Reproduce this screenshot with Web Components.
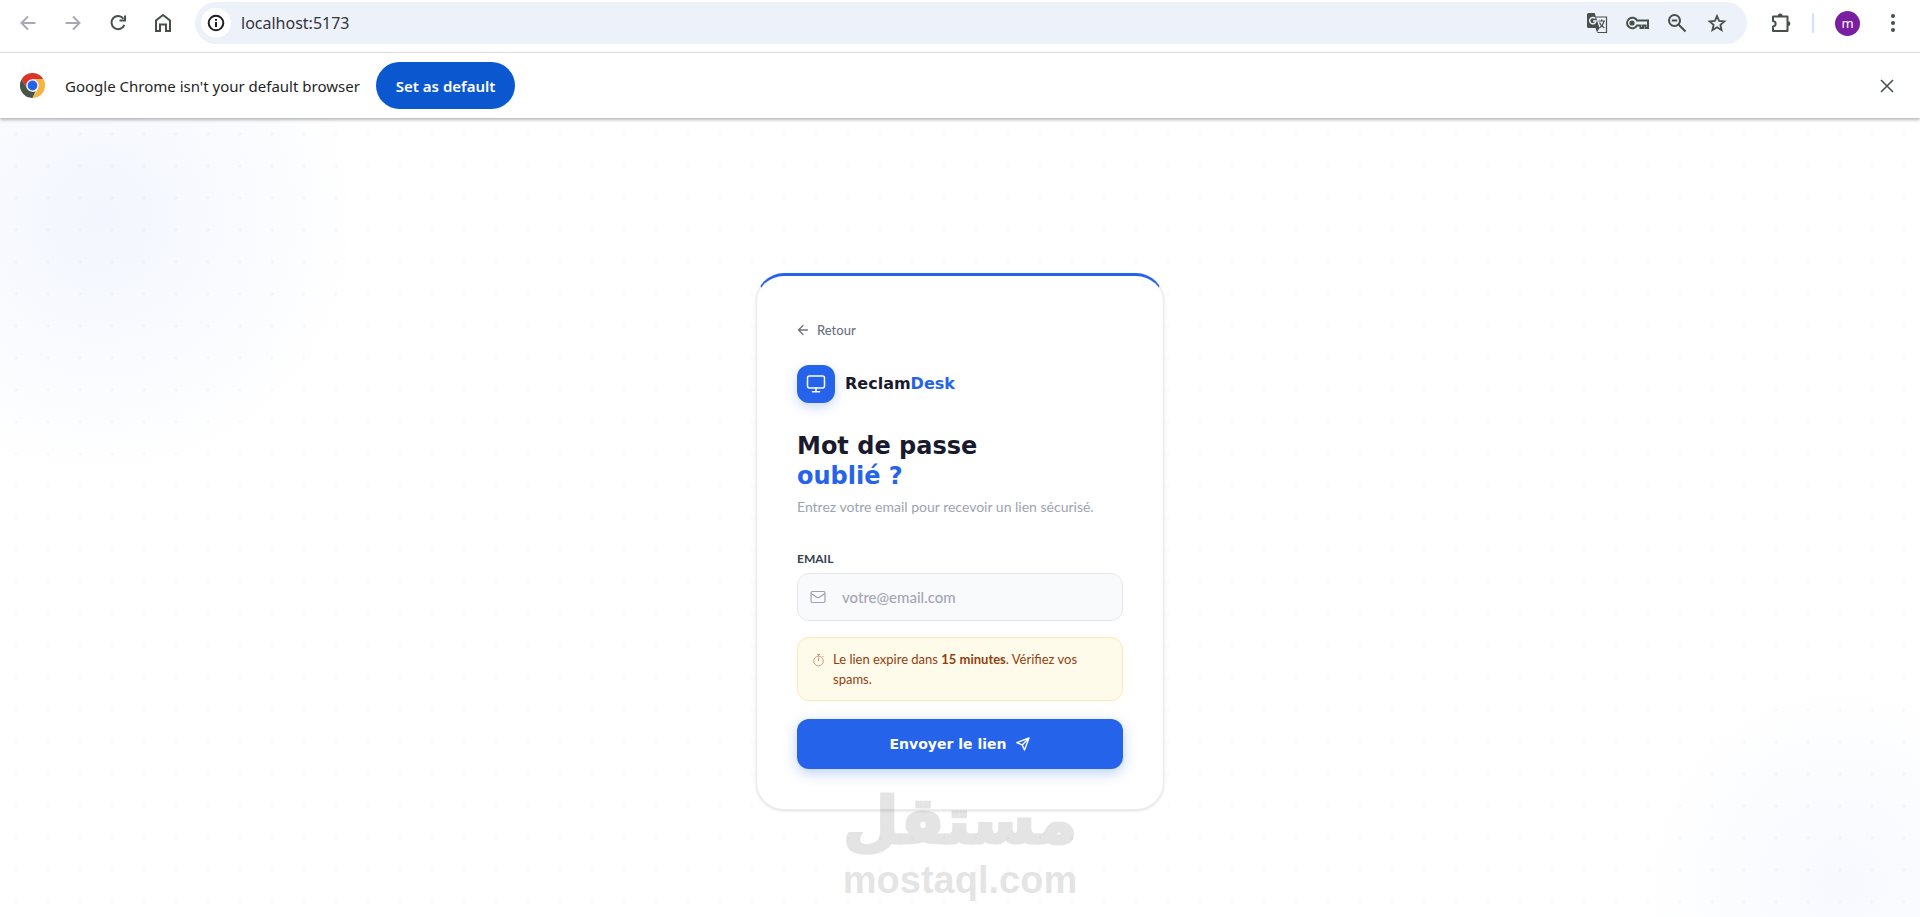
<!DOCTYPE html>
<html lang="fr">
<head>
<meta charset="utf-8">
<meta name="viewport" content="width=device-width, initial-scale=1">
<title>ReclamDesk</title>
<style>
    html, body { margin: 0; }
    body {
        display: flex;
        flex-direction: column;
        min-height: 100vh;
        background: #fff;
        font-family: Lato, "Liberation Sans", sans-serif;
        --blue: #2563eb;
        --ink: #1a1a2e;
        --title-font: "DejaVu Sans", sans-serif;
        --chrome-font: "Noto Sans", "Open Sans", sans-serif;
    }
</style>
</head>
<body>
<browser-toolbar></browser-toolbar>
<browser-infobar>
    Google Chrome isn't your default browser
    <span slot="action">Set as default</span>
</browser-infobar>
<reclam-page>
    <reclam-card>
        <reclam-brand slot="brand"></reclam-brand>
        <span slot="title">Mot de passe</span>
        <span slot="highlight">oublié ?</span>
        <span slot="subtitle">Entrez votre email pour recevoir un lien sécurisé.</span>
        <reclam-field label="Email" placeholder="votre@email.com"></reclam-field>
        <reclam-notice>Le lien expire dans <strong>15 minutes</strong>. Vérifiez vos spams.</reclam-notice>
        <reclam-submit>Envoyer le lien</reclam-submit>
    </reclam-card>
    <mostaql-mark slot="mark"></mostaql-mark>
</reclam-page>

<script>
// Barre d'outils du navigateur
class BrowserToolbar extends HTMLElement {
    constructor() {
        super();
        this._root = this.attachShadow({ mode: "open" });
    }
    connectedCallback() {
        this._root.innerHTML = `
            <style>
                :host {
                    display: flex;
                    align-items: center;
                    height: 53px;
                    box-sizing: border-box;
                    padding: 2px 12px 8px 12px;
                    border-bottom: 1px solid #dcdcdc;
                    background: #fff;
                    color: #47504b;
                    font-family: var(--chrome-font);
                }
                button {
                    display: flex;
                    align-items: center;
                    justify-content: center;
                    flex: none;
                    padding: 0;
                    border: 0;
                    background: none;
                    color: inherit;
                    font: inherit;
                }
                svg { display: block; fill: none; stroke: currentColor; stroke-width: 2; }
                nav { display: flex; gap: 13px; }
                nav button { width: 32px; height: 32px; }
                nav button:disabled { color: #a9a9b4; }
                .address {
                    display: flex;
                    align-items: center;
                    flex: 1;
                    height: 42px;
                    box-sizing: border-box;
                    margin: 0 14px 0 16px;
                    padding: 0 10px 0 6px;
                    border-radius: 21px;
                    background: #edf1fa;
                }
                .info { width: 30px; height: 30px; border-radius: 50%; background: #fff; color: #1f1f1f; }
                input {
                    flex: 1;
                    min-width: 0;
                    padding: 0;
                    margin-left: 10px;
                    border: 0;
                    outline: 0;
                    background: none;
                    color: #33363b;
                    font: 16px/24px var(--chrome-font);
                }
                .actions { display: flex; }
                .actions button { width: 40px; height: 32px; }
                .ext { width: 40px; height: 32px; }
                .sep { width: 2px; height: 20px; margin: 0 21px 0 11px; background: #d3e3fd; }
                .avatar {
                    width: 25px;
                    height: 25px;
                    border-radius: 50%;
                    background: #7b1fa2;
                    color: #fff;
                    font-size: 13px;
                    line-height: 20px;
                }
                .menu { width: 30px; height: 32px; margin-left: 18px; }
                .menu svg { fill: currentColor; stroke: none; }
            </style>
            <nav>
                <button disabled aria-label="Back"><svg width="16" height="16" viewBox="0 0 16 16"><path d="M15.500 8H1.500M8 1.500 1.500 8 8 14.500"/></svg></button>
                <button disabled aria-label="Forward"><svg width="16" height="16" viewBox="0 0 16 16"><path d="M.5 8h14M8 1.500 14.500 8 8 14.500"/></svg></button>
                <button aria-label="Reload"><svg width="18" height="18" viewBox="0 0 18 18"><path d="M14.500 4.800A6.600 6.600 0 1 0 15.300 10.800M16 1.500v5h-5.500"/></svg></button>
                <button aria-label="Home"><svg width="18" height="20" viewBox="0 0 18 20"><path d="M2 18V7.500L9 2l7 5.500V18h-4v-6.500H6V18z"/></svg></button>
            </nav>
            <div class="address">
                <button class="info" aria-label="Site information">
                    <svg width="18" height="18" viewBox="0 0 18 18"><circle cx="9" cy="9" r="7.300"/><path d="M9 8v5M9 5v1.800"/></svg>
                </button>
                <input type="text" aria-label="Address" value="localhost:5173">
                <div class="actions">
                    <button aria-label="Translate">
                        <svg width="22" height="22" viewBox="0 0 22 22" stroke-width="1.300">
                            <path d="M10 5h10.500v15.500H11.500" stroke-width="1.200"/>
                            <path fill="currentColor" stroke="none" d="M2.500 1h6.200L13.500 16 11 20.500 9.500 16h-7A1.500 1.500 0 0 1 1 14.500v-12A1.500 1.500 0 0 1 2.500 1z"/>
                            <path stroke="#edf1fa" stroke-width="1.500" d="M9.200 6.500A3.200 3.200 0 1 0 10 9H7"/>
                            <path stroke-width="1.200" d="M12.500 9H19M15.700 7.500V9M18 9c-.5 3-2.500 5.500-4.500 7M13.500 10.500c1 2.500 3 4.500 5 5.500"/>
                        </svg>
                    </button>
                    <button aria-label="Passwords">
                        <svg width="24" height="14" viewBox="0 0 24 14"><path d="M12 4.500h11v7.500h-2.500V9.500H18V12h-2.500V9.500H12A5.300 5.300 0 1 1 12 4.500z"/><circle cx="7" cy="7" r="1.600" fill="currentColor"/></svg>
                    </button>
                    <button aria-label="Zoom">
                        <svg width="20" height="20" viewBox="0 0 20 20"><circle cx="7.500" cy="7.500" r="5.500"/><path d="m11.500 11.500 7 7M4.800 7.500h5.400"/></svg>
                    </button>
                    <button aria-label="Bookmark">
                        <svg width="20" height="20" viewBox="0 0 20 20"><path stroke-width="1.800" d="m10 3 2.100 4.900 5.300.5-4 3.500 1.200 5.200-4.600-2.800-4.600 2.800 1.200-5.200-4-3.500 5.300-.5z"/></svg>
                    </button>
                </div>
            </div>
            <button class="ext" aria-label="Extensions">
                <svg width="22" height="22" viewBox="0 0 22 22"><path d="M3 4.500h14.500V19H3v-4.500c3.500-.5 3.500-5 0-5.500z" stroke-linejoin="round"/><path fill="currentColor" stroke="none" d="M7.800 4a2.400 2.400 0 0 1 4.800 0zM18 9.300a2.400 2.400 0 0 1 0 4.800z"/></svg>
            </button>
            <span class="sep"></span>
            <button class="avatar">m</button>
            <button class="menu" aria-label="Menu">
                <svg width="4" height="18" viewBox="0 0 4 18"><circle cx="2" cy="2" r="2"/><circle cx="2" cy="9" r="2"/><circle cx="2" cy="16" r="2"/></svg>
            </button>
        `;
    }
}

// Bandeau "navigateur par défaut"
class BrowserInfobar extends HTMLElement {
    constructor() {
        super();
        this._root = this.attachShadow({ mode: "open" });
    }
    connectedCallback() {
        this._root.innerHTML = `
            <style>
                :host {
                    display: flex;
                    align-items: center;
                    position: relative;
                    z-index: 1;
                    height: 65px;
                    box-sizing: border-box;
                    padding: 0 20px;
                    background: #fff;
                    box-shadow: 0 2px 3px rgba(0, 0, 0, .28);
                    color: #1f1f1f;
                    font: 15px/24px var(--chrome-font);
                }
                .logo { flex: none; margin-right: 20px; }
                .action {
                    height: 47px;
                    margin-left: 16px;
                    padding: 0 20px;
                    border: 0;
                    border-radius: 24px;
                    background: #0b57d0;
                    color: #fff;
                    font: 600 15px/24px var(--chrome-font);
                }
                .close { margin-left: auto; padding: 6px; border: 0; background: none; color: #47504b; }
                .close svg { display: block; }
            </style>
            <svg class="logo" width="25" height="25" viewBox="0 0 24 24">
                <path fill="#db3328" d="M1.600 6A12 12 0 0 1 22.400 6H12L6.800 15z"/>
                <path fill="#f5b342" d="M22.400 6A12 12 0 0 1 12 24l5.200-9L12 6z"/>
                <path fill="#47544a" d="M12 24A12 12 0 0 1 1.600 6l5.200 9 5.200 3 3-.5z"/>
                <circle cx="12" cy="12" r="6" fill="#fff"/>
                <circle cx="12" cy="12" r="4.700" fill="#2463eb"/>
            </svg>
            <span><slot></slot></span>
            <button class="action"><slot name="action"></slot></button>
            <button class="close" aria-label="Close">
                <svg width="14" height="14" viewBox="0 0 14 14" fill="none" stroke="currentColor" stroke-width="1.600"><path d="m1 1 12 12M13 1 1 13"/></svg>
            </button>
        `;
    }
}

// Fond de page : halos bleus + grille de points
class ReclamPage extends HTMLElement {
    constructor() {
        super();
        this._root = this.attachShadow({ mode: "open" });
    }
    connectedCallback() {
        this._root.innerHTML = `
            <style>
                :host {
                    display: flex;
                    flex: 1;
                    flex-direction: column;
                    align-items: center;
                    justify-content: center;
                    position: relative;
                    box-sizing: border-box;
                    padding: 48px 16px 0;
                    background:
                        radial-gradient(circle 260px at 100px 100px, rgba(37, 99, 235, .06), transparent),
                        radial-gradient(circle 200px at calc(100% - 78px) calc(100% - 34px), rgba(37, 99, 235, .04), transparent),
                        radial-gradient(circle, rgba(26, 26, 46, .04) 1px, transparent 1px) 0 0 / 32px 32px,
                        #fff;
                }
                .mark { position: absolute; bottom: 16px; left: 50%; transform: translateX(-50%); }
            </style>
            <slot></slot>
            <div class="mark"><slot name="mark"></slot></div>
        `;
    }
}

class ReclamCard extends HTMLElement {
    constructor() {
        super();
        this._root = this.attachShadow({ mode: "open" });
    }
    connectedCallback() {
        this._root.innerHTML = `
            <style>
                :host {
                    display: block;
                    width: 100%;
                    max-width: 408px;
                    box-sizing: border-box;
                    padding: 40px;
                    border: 1px solid #eceef0;
                    border-top: 3px solid var(--blue);
                    border-radius: 28px;
                    background: #fff;
                    box-shadow: 0 1px 3px rgba(0, 0, 0, .14);
                }
                .back {
                    display: flex;
                    align-items: center;
                    width: fit-content;
                    gap: 8px;
                    margin-bottom: 21px;
                    color: #6b7280;
                    font-size: 13px;
                    line-height: 28px;
                    font-weight: 500;
                    text-decoration: none;
                }
                h1 {
                    margin: 28px 0 6px;
                    color: var(--ink);
                    font: 700 24px/30px var(--title-font);
                }
                h1 em { display: block; color: var(--blue); font-style: normal; }
                .subtitle { margin: 0 0 34px; color: #9ca3af; font-size: 14px; line-height: 20px; }
                form { display: flex; flex-direction: column; gap: 16px; }
            </style>
            <a class="back" href="#">
                <svg width="12" height="12" viewBox="0 0 12 12" fill="none" stroke="currentColor" stroke-width="1.300" stroke-linecap="round" stroke-linejoin="round"><path d="M10.500 6h-9M6 1.500 1.500 6 6 10.500"/></svg>
                Retour
            </a>
            <slot name="brand"></slot>
            <h1><slot name="title"></slot><em><slot name="highlight"></slot></em></h1>
            <p class="subtitle"><slot name="subtitle"></slot></p>
            <form><slot></slot></form>
        `;
    }
}

class ReclamBrand extends HTMLElement {
    constructor() {
        super();
        this._root = this.attachShadow({ mode: "open" });
    }
    connectedCallback() {
        this._root.innerHTML = `
            <style>
                :host {
                    display: flex;
                    align-items: center;
                    gap: 10px;
                    color: var(--ink);
                    font: 700 16px/20px var(--title-font);
                }
                .tile {
                    display: flex;
                    align-items: center;
                    justify-content: center;
                    width: 38px;
                    height: 38px;
                    border-radius: 12px;
                    background: var(--blue);
                    box-shadow: 0 4px 12px rgba(37, 99, 235, .25);
                }
                b { color: var(--blue); }
            </style>
            <span class="tile">
                <svg width="20" height="20" viewBox="0 0 20 20" fill="none" stroke="#fff" stroke-width="1.500" stroke-linecap="round" stroke-linejoin="round"><rect x="1.500" y="2" width="17" height="12" rx="2"/><path d="M10 14v3.500M6.500 17.800h7"/></svg>
            </span>
            <span>Reclam<b>Desk</b></span>
        `;
    }
}

class ReclamField extends HTMLElement {
    constructor() {
        super();
        this._root = this.attachShadow({ mode: "open" });
    }
    connectedCallback() {
        this._root.innerHTML = `
            <style>
                :host { display: block; }
                label {
                    display: block;
                    margin-bottom: 6px;
                    color: #374151;
                    font-size: 12px;
                    line-height: 16px;
                    font-weight: 700;
                    text-transform: uppercase;
                }
                .box {
                    display: flex;
                    align-items: center;
                    gap: 16px;
                    height: 48px;
                    box-sizing: border-box;
                    padding: 0 12px;
                    border: 1px solid #e5e7eb;
                    border-radius: 12px;
                    background: #f9fafb;
                    color: #9ca3af;
                }
                .box:focus-within { border-color: var(--blue); }
                input {
                    flex: 1;
                    min-width: 0;
                    padding: 0;
                    border: 0;
                    outline: 0;
                    background: none;
                    color: #1a1a2e;
                    font: 500 15px/20px Lato, sans-serif;
                }
                input::placeholder { color: #a3a6b5; opacity: 1; }
            </style>
            <label for="field"></label>
            <div class="box">
                <svg width="16" height="16" viewBox="0 0 16 16" fill="none" stroke="currentColor" stroke-width="1.200" stroke-linejoin="round"><rect x="1" y="2.500" width="14" height="11" rx="1.500"/><path d="m1.200 4.500 5.500 3.800q1.300.8 2.600 0l5.500-3.800"/></svg>
                <input id="field" type="email">
            </div>
        `;
        this._root.querySelector("label").textContent = this.getAttribute("label");
        this._root.querySelector("input").placeholder = this.getAttribute("placeholder");
    }
}

class ReclamNotice extends HTMLElement {
    constructor() {
        super();
        this._root = this.attachShadow({ mode: "open" });
    }
    connectedCallback() {
        this._root.innerHTML = `
            <style>
                :host {
                    display: flex;
                    gap: 8px;
                    padding: 11px 32px 11px 14px;
                    border: 1px solid #fde9b5;
                    border-radius: 12px;
                    background: #fffbeb;
                    color: #92400e;
                    font-size: 13px;
                    line-height: 20px;
                }
                svg { flex: none; margin-top: 4px; }
            </style>
            <svg width="13" height="14" viewBox="0 0 13 14" fill="none" stroke="#d09a78" stroke-width="1"><circle cx="6.500" cy="8" r="4.800"/><path d="M6.500 8V4.500M6.500 3V1.500M5 1.500h3M10.500 4l1-1"/></svg>
            <span><slot></slot></span>
        `;
    }
}

class ReclamSubmit extends HTMLElement {
    constructor() {
        super();
        this._root = this.attachShadow({ mode: "open" });
    }
    connectedCallback() {
        this._root.innerHTML = `
            <style>
                :host { display: block; margin-top: 2px; }
                button {
                    display: flex;
                    align-items: center;
                    justify-content: center;
                    gap: 10px;
                    width: 100%;
                    height: 50px;
                    border: 0;
                    border-radius: 12px;
                    background: var(--blue);
                    box-shadow: 0 4px 14px rgba(37, 99, 235, .3);
                    color: #fff;
                    font: 700 14px/20px var(--title-font);
                }
            </style>
            <button type="submit">
                <slot></slot>
                <svg width="14" height="14" viewBox="0 0 14 14" fill="none" stroke="currentColor" stroke-width="1.400" stroke-linejoin="round" stroke-linecap="round"><path d="M13 1 .8 5.600l5.400 2.300L8.500 13zM13 1 6.200 7.900"/></svg>
            </button>
        `;
    }
}

class MostaqlMark extends HTMLElement {
    constructor() {
        super();
        this._root = this.attachShadow({ mode: "open" });
    }
    connectedCallback() {
        this._root.innerHTML = `
            <style>
                :host {
                    display: flex;
                    flex-direction: column;
                    align-items: center;
                    opacity: .1;
                    color: #000;
                    pointer-events: none;
                }
                .ar {
                    font: 700 64px/76px "DejaVu Sans", sans-serif;
                    -webkit-text-stroke: 3px #000;
                }
                .en { font: 700 38px/42px "Liberation Sans", sans-serif; }
            </style>
            <span class="ar" lang="ar" dir="rtl">مستقل</span>
            <span class="en">mostaql.com</span>
        `;
    }
}

window.customElements.define("browser-toolbar", BrowserToolbar);
window.customElements.define("browser-infobar", BrowserInfobar);
window.customElements.define("reclam-page", ReclamPage);
window.customElements.define("reclam-card", ReclamCard);
window.customElements.define("reclam-brand", ReclamBrand);
window.customElements.define("reclam-field", ReclamField);
window.customElements.define("reclam-notice", ReclamNotice);
window.customElements.define("reclam-submit", ReclamSubmit);
window.customElements.define("mostaql-mark", MostaqlMark);
</script>
</body>
</html>
